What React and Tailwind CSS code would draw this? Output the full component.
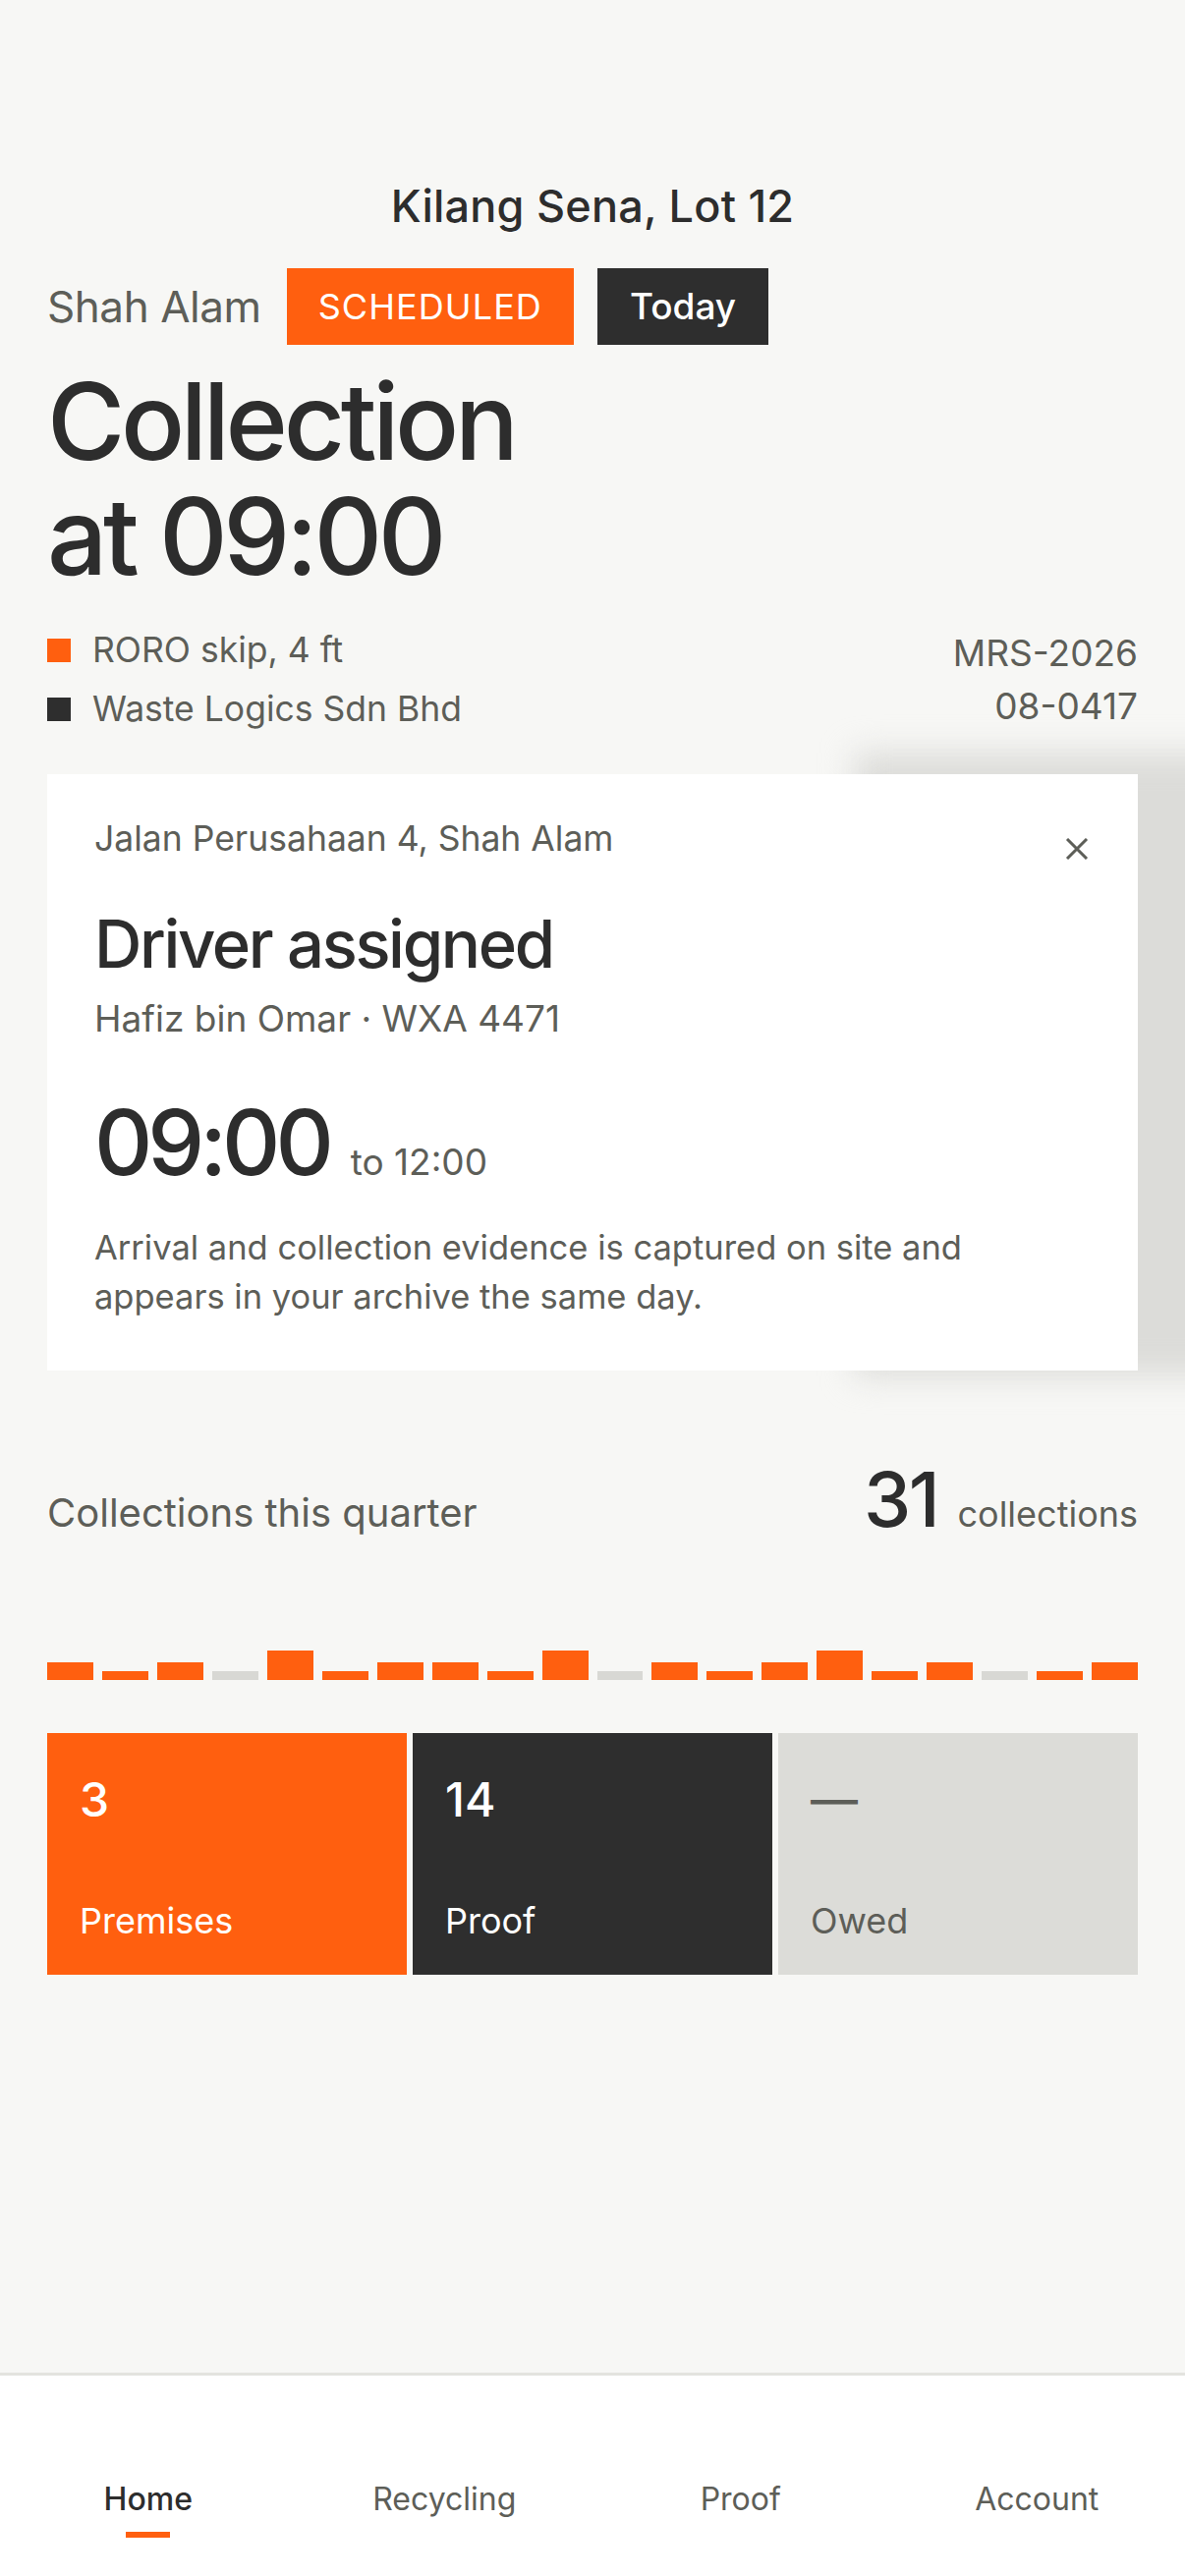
import React from "react";

const bars = [
  "m", "s", "m", "g", "t", "s", "m", "m", "s", "t",
  "g", "m", "s", "m", "t", "s", "m", "g", "s", "m",
];

function Bar({ k }) {
  if (k === "t") return <div className="flex-1 h-[30px] bg-[#ff5f0f]" />;
  if (k === "m") return <div className="flex-1 h-[18px] bg-[#ff5f0f]" />;
  if (k === "s") return <div className="flex-1 h-[9px] bg-[#ff5f0f]" />;
  return <div className="flex-1 h-[9px] bg-[#d8d8d4]" />;
}

export default function App() {
  return (
    <div
      className="min-h-screen w-full flex flex-col bg-[#f7f7f5] text-[#2d2d2d] overflow-hidden"
      style={{ fontFamily: "Inter, 'Noto Sans', sans-serif" }}
    >
      <main className="flex-1 flex flex-col px-[48px]">
        <h1 className="pt-[189px] text-center text-[45px] leading-[42px] font-medium tracking-[0.005em]">
          Kilang Sena, Lot 12
        </h1>

        <div className="mt-[42px] flex items-center">
          <span className="text-[44px] leading-[44px] text-[#5d5e58] tracking-[-0.01em] mr-[26px]">
            Shah Alam
          </span>
          <span className="h-[78px] px-[32px] flex items-center bg-[#ff5f0f] text-white text-[36px] tracking-[0.03em]">
            SCHEDULED
          </span>
          <span className="ml-[24px] h-[78px] px-[33px] flex items-center bg-[#2e2e2e] text-white text-[37px] font-medium">
            Today
          </span>
        </div>

        <h2 className="mt-[19px] text-[108px] leading-[117px] font-medium tracking-[-0.04em]">
          Collection
          <br />
          at 09:00
        </h2>

        <div className="mt-[34px] flex justify-between items-start">
          <div className="flex flex-col gap-[12px]">
            <div className="flex items-center h-[48px]">
              <span className="w-[24px] h-[24px] bg-[#ff5f0f] mr-[22px]" />
              <span className="text-[35.5px] leading-[48px] text-[#5d5e58]">RORO skip, 4 ft</span>
            </div>
            <div className="flex items-center h-[48px]">
              <span className="w-[24px] h-[24px] bg-[#2e2e2e] mr-[22px]" />
              <span className="text-[35.5px] leading-[48px] text-[#5d5e58]">Waste Logics Sdn Bhd</span>
            </div>
          </div>
          <div className="text-right text-[37px] leading-[54px] text-[#5d5e58]">
            MRS-2026
            <br />
            08-0417
          </div>
        </div>

        <div className="relative mt-[42px]">
          <div className="absolute left-[822px] -right-[200px] -top-[22px] -bottom-[6px] bg-[#dcdcd9] blur-[16px]" />
          <div className="relative bg-white pl-[48px] pr-[50px] pt-[42px] pb-[50px]">
            <div className="flex justify-between items-start">
              <span className="text-[35.5px] leading-[48px] text-[#5d5e58]">
                Jalan Perusahaan 4, Shah Alam
              </span>
              <svg className="mt-[23px]" width="24" height="22" viewBox="0 0 24 22" fill="none">
                <path d="M2 1 L22 21 M22 1 L2 21" stroke="#5d5e58" strokeWidth="3" />
              </svg>
            </div>
            <div className="mt-[47px] text-[67px] leading-[72px] font-medium tracking-[-0.035em]">
              Driver assigned
            </div>
            <div className="mt-[16px] text-[37px] leading-[48px] text-[#5d5e58]">
              Hafiz bin Omar · WXA 4471
            </div>
            <div className="mt-[56px] flex items-baseline">
              <span className="text-[92px] leading-[92px] font-medium tracking-[-0.055em]">09:00</span>
              <span className="ml-[22px] text-[37px] text-[#5d5e58]">to 12:00</span>
            </div>
            <p className="mt-[34px] max-w-[940px] text-[34.5px] leading-[50px] text-[#5d5e58]">
              Arrival and collection evidence is captured on site and appears in your archive the same day.
            </p>
          </div>
        </div>

        <div className="mt-[93px] flex justify-between items-baseline">
          <span className="text-[40px] text-[#5d5e58]">Collections this quarter</span>
          <span className="flex items-baseline">
            <span className="text-[77px] leading-[77px] font-medium tracking-[-0.03em]">31</span>
            <span className="ml-[20px] text-[36px] text-[#5d5e58]">collections</span>
          </span>
        </div>

        <div className="mt-[110px] h-[30px] flex items-end gap-[9px]">
          {bars.map((k, i) => (
            <Bar key={i} k={k} />
          ))}
        </div>

        <div className="mt-[54px] grid grid-cols-3 gap-[6px]">
          <div className="h-[246px] bg-[#ff5f0f] text-white flex flex-col justify-between pl-[33px] pt-[44px] pb-[37px]">
            <span className="text-[48px] leading-[48px] font-medium">3</span>
            <span className="text-[36px] leading-[36px]">Premises</span>
          </div>
          <div className="h-[246px] bg-[#2e2e2e] text-white flex flex-col justify-between pl-[33px] pt-[44px] pb-[37px]">
            <span className="text-[48px] leading-[48px] font-medium">14</span>
            <span className="text-[36px] leading-[36px]">Proof</span>
          </div>
          <div className="h-[246px] bg-[#dcdcd8] text-[#5d5e58] flex flex-col justify-between pl-[33px] pt-[44px] pb-[37px]">
            <span className="text-[48px] leading-[48px] font-medium">—</span>
            <span className="text-[36px] leading-[36px]">Owed</span>
          </div>
        </div>
      </main>

      <nav className="border-t-[3px] border-[#e3e3df] bg-white grid grid-cols-4 pt-[110px] pb-[39px]">
        {["Home", "Recycling", "Proof", "Account"].map((l, i) => (
          <div key={l} className="flex flex-col items-center">
            <span
              className={
                i === 0
                  ? "text-[32px] leading-[32px] font-medium text-[#2d2d2d]"
                  : "text-[32px] leading-[32px] text-[#5d5e58]"
              }
            >
              {l}
            </span>
            <span className={i === 0 ? "mt-[17px] w-[45px] h-[6px] bg-[#ff5f0f]" : "mt-[17px] w-[45px] h-[6px]"} />
          </div>
        ))}
      </nav>
    </div>
  );
}
